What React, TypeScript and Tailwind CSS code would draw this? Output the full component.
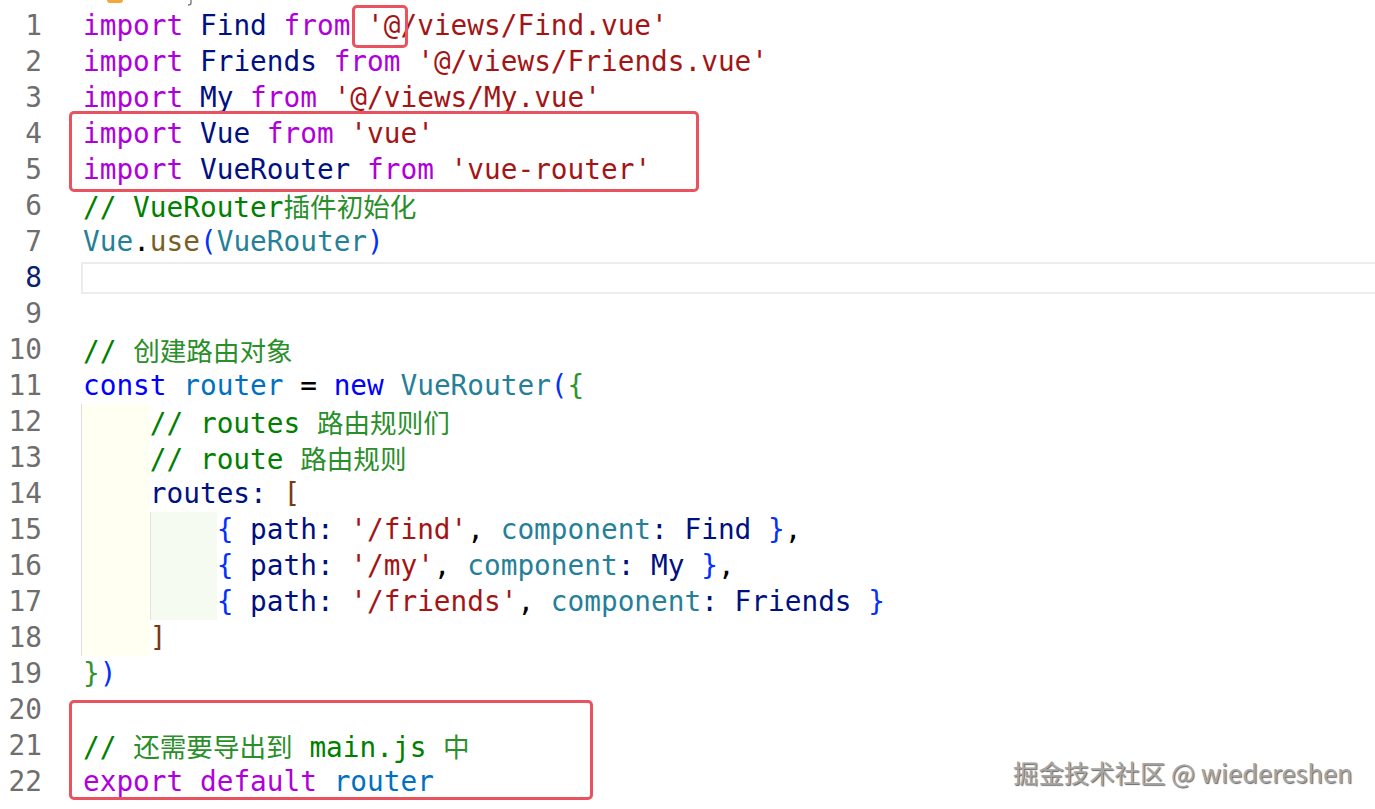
import React from "react";

type Tok = [string, string] | string;

const kw = "text-[#af00db]";
const vr = "text-[#001080]";
const st = "text-[#a31515]";
const cm = "text-[#008000]";
const ty = "text-[#267f99]";
const fn = "text-[#795e26]";
const sto = "text-[#0000ff]";
const kon = "text-[#0070c1]";
const b1 = "text-[#0431fa]";
const b2 = "text-[#319331]";
const b3 = "text-[#7b3814]";
const cj = "CJK";

type Line = { indent?: number; toks: Tok[]; active?: boolean };

const lines: Line[] = [
  { toks: [["import", kw], " ", ["Find", vr], " ", ["from", kw], " ", ["'@/views/Find.vue'", st]] },
  { toks: [["import", kw], " ", ["Friends", vr], " ", ["from", kw], " ", ["'@/views/Friends.vue'", st]] },
  { toks: [["import", kw], " ", ["My", vr], " ", ["from", kw], " ", ["'@/views/My.vue'", st]] },
  { toks: [["import", kw], " ", ["Vue", vr], " ", ["from", kw], " ", ["'vue'", st]] },
  { toks: [["import", kw], " ", ["VueRouter", vr], " ", ["from", kw], " ", ["'vue-router'", st]] },
  { toks: [["// VueRouter", cm], ["插件初始化", cj]] },
  { toks: [["Vue", ty], ".", ["use", fn], ["(", b1], ["VueRouter", ty], [")", b1]] },
  { toks: [], active: true },
  { toks: [] },
  { toks: [["// ", cm], ["创建路由对象", cj]] },
  { toks: [["const", sto], " ", ["router", kon], " = ", ["new", sto], " ", ["VueRouter", ty], ["(", b1], ["{", b2]] },
  { indent: 1, toks: [["// routes ", cm], ["路由规则们", cj]] },
  { indent: 1, toks: [["// route ", cm], ["路由规则", cj]] },
  { indent: 1, toks: [["routes", vr], [": ", vr], ["[", b3]] },
  { indent: 2, toks: [["{", b1], " ", ["path", vr], [": ", vr], ["'/find'", st], ", ", ["component", ty], [": ", vr], ["Find", vr], " ", ["}", b1], ","] },
  { indent: 2, toks: [["{", b1], " ", ["path", vr], [": ", vr], ["'/my'", st], ", ", ["component", ty], [": ", vr], ["My", vr], " ", ["}", b1], ","] },
  { indent: 2, toks: [["{", b1], " ", ["path", vr], [": ", vr], ["'/friends'", st], ", ", ["component", ty], [": ", vr], ["Friends", vr], " ", ["}", b1]] },
  { indent: 1, toks: [["]", b3]] },
  { toks: [["}", b2], [")", b1]] },
  { toks: [] },
  { toks: [["// ", cm], ["还需要导出到", cj], [" main.js ", cm], ["中", cj]] },
  { toks: [["export", kw], " ", ["default", kw], " ", ["router", kon]] },
];

function Token({ t }: { t: Tok }) {
  if (typeof t === "string") return <span className="text-[#000000]">{t}</span>;
  const [text, cls] = t;
  if (cls === cj)
    return (
      <span className="text-[#2a8f2a] text-[26.6px] font-['Noto_Sans_CJK_SC','DejaVu_Sans_Mono',sans-serif]">
        {text}
      </span>
    );
  return <span className={cls}>{text}</span>;
}

export default function App() {
  return (
    <div className="relative w-[1375px] h-[809px] overflow-hidden bg-white font-['DejaVu_Sans_Mono','Noto_Sans_CJK_SC',monospace] text-[27.75px]">
      {/* partially visible breadcrumb */}
      <div className="flex items-start h-[8px] overflow-hidden">
        <span className="ml-[107px] w-[16px] h-[3px] rounded-b-[3px] bg-[#f2a93b]" />
        <svg className="ml-[62px]" width="8" height="7" viewBox="0 0 8 7">
          <path d="M6 0 V3 Q6 5 3 5" stroke="#7a7a7a" strokeWidth="1.4" fill="none" />
        </svg>
      </div>

      <div className="flex flex-col">
        {lines.map((ln, i) => (
          <div key={i} className="flex h-[36px] leading-[36px]">
            <div
              className={`w-[42px] shrink-0 text-right ${
                ln.active ? "text-[#0b216f]" : "text-[#6e6e6e]"
              }`}
            >
              {i + 1}
            </div>
            <div className="w-[39px] shrink-0" />
            {ln.active ? (
              <div className="flex-1 my-[2px] border-2 border-r-0 border-[#ececec]" />
            ) : (
              <div className="flex-1 flex whitespace-pre">
                {ln.indent && ln.indent >= 1 ? (
                  <span className="w-[calc(4ch+2px)] shrink-0 border-l border-[#dedede] bg-[#fffff2]" />
                ) : (
                  <span className="w-[2px] shrink-0" />
                )}
                {ln.indent && ln.indent >= 2 ? (
                  <span className="w-[4ch] shrink-0 border-l border-[#e2e2e2] bg-[#f5fbf1]" />
                ) : null}
                <span>
                  {ln.toks.map((t, j) => (
                    <Token key={j} t={t} />
                  ))}
                </span>
              </div>
            )}
          </div>
        ))}
      </div>

      {/* red annotation boxes */}
      <div className="absolute left-[352px] top-[5px] w-[56px] h-[43px] border-[3px] border-[#e9525f] rounded-[5px]" />
      <div className="absolute left-[69px] top-[111px] w-[630px] h-[81px] border-[3px] border-[#e9525f] rounded-[5px]" />
      <div className="absolute left-[69px] top-[700px] w-[524px] h-[100px] border-[3px] border-[#e9525f] rounded-[5px]" />

      {/* watermark */}
      <div className="absolute left-[1013px] top-[755px] leading-[34px] text-[25.4px] text-[#a6a6a6] font-['Noto_Sans_CJK_SC','Noto_Sans',sans-serif] whitespace-nowrap [text-shadow:1px_1px_1px_rgba(0,0,0,0.6)]">
        掘金技术社区 @ wiedereshen
      </div>
    </div>
  );
}
